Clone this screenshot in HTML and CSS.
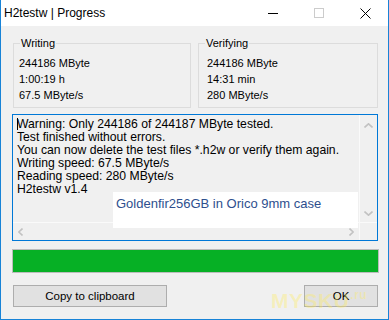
FILE: index.html
```html
<!DOCTYPE html>
<html>
<head>
<meta charset="utf-8">
<title>H2testw | Progress</title>
<link rel="stylesheet" href="styles.css">
</head>
<body>
<div class="window">
  <div class="titlebar">
    <span class="title">H2testw | Progress</span>
    <div class="controls">
      <span class="ctl"><svg width="10" height="10" viewBox="0 0 10 10"><line x1="0" y1="5.5" x2="10" y2="5.5" stroke="#000" stroke-width="1"/></svg></span>
      <span class="ctl"><svg width="10" height="10" viewBox="0 0 10 10"><rect x="0.5" y="0.5" width="9" height="9" fill="none" stroke="#cccccc" stroke-width="1"/></svg></span>
      <span class="ctl"><svg width="11" height="11" viewBox="0 0 11 11"><path d="M0.5 0.5 L10.5 10.5 M10.5 0.5 L0.5 10.5" stroke="#000" stroke-width="1" fill="none"/></svg></span>
    </div>
  </div>
  <div class="client">
    <div class="groups">
      <fieldset class="group g-write">
        <legend>Writing</legend>
        <div class="group-body">
          <div>244186 MByte</div>
          <div>1:00:19 h</div>
          <div>67.5 MByte/s</div>
        </div>
      </fieldset>
      <fieldset class="group g-verify">
        <legend>Verifying</legend>
        <div class="group-body">
          <div>244186 MByte</div>
          <div>14:31 min</div>
          <div>280 MByte/s</div>
        </div>
      </fieldset>
    </div>
    <div class="log">
      <div class="log-text">
        <div><span class="caret"></span>Warning: Only 244186 of 244187 MByte tested.</div>
        <div>Test finished without errors.</div>
        <div>You can now delete the test files *.h2w or verify them again.</div>
        <div>Writing speed: 67.5 MByte/s</div>
        <div>Reading speed: 280 MByte/s</div>
        <div>H2testw v1.4</div>
      </div>
      <div class="vscroll">
        <svg width="9" height="5" viewBox="0 0 9 5"><polyline points="0.5,4.5 4.5,0.8 8.5,4.5" fill="none" stroke="#c2c2c2" stroke-width="1.6"/></svg>
        <svg width="9" height="5" viewBox="0 0 9 5"><polyline points="0.5,0.5 4.5,4.2 8.5,0.5" fill="none" stroke="#c2c2c2" stroke-width="1.6"/></svg>
      </div>
      <div class="hscroll">
        <svg width="5" height="8" viewBox="0 0 5 8"><polyline points="4.5,0.5 0.8,4 4.5,7.5" fill="none" stroke="#c2c2c2" stroke-width="1.6"/></svg>
        <svg width="5" height="8" viewBox="0 0 5 8"><polyline points="0.5,0.5 4.2,4 0.5,7.5" fill="none" stroke="#c2c2c2" stroke-width="1.6"/></svg>
      </div>
      <div class="corner"></div>
      <div class="note">Goldenfir256GB in Orico 9mm case</div>
    </div>
    <div class="progress"><div class="fill" style="width:100%"></div></div>
    <div class="buttons">
      <button class="btn btn-copy">Copy to clipboard</button>
      <button class="btn btn-ok">OK</button>
    </div>
  </div>
  <div class="watermark">MYSKU<span class="wm-ru">.ru</span></div>
</div>
</body>
</html>
```

FILE: styles.css
```css
html, body {
  margin: 0;
  padding: 0;
  background: #ffffff;
}

.window {
  position: relative;
  width: 389px;
  height: 320px;
  box-sizing: border-box;
  border-left: 1px solid #1883d7;
  border-right: 1px solid #1883d7;
  border-bottom: 1px solid #1883d7;
  display: flex;
  flex-direction: column;
  overflow: hidden;
}

.titlebar {
  height: 26px;
  flex: none;
  background: #ffffff;
  display: flex;
  align-items: center;
  justify-content: space-between;
  padding-left: 3px;
}

.title {
  font-family: "Liberation Sans", Arial, sans-serif;
  font-size: 12px;
  color: #000;
}

.controls {
  display: flex;
  height: 26px;
}

.ctl {
  width: 46px;
  height: 26px;
  display: flex;
  align-items: center;
  justify-content: center;
}

.ctl svg {
  display: block;
}

.client {
  flex: 1;
  background: #f0f0f0;
  padding: 10px 10px 0 11px;
  font-family: "Liberation Sans", Arial, sans-serif;
  font-size: 11px;
  color: #000;
}

.groups {
  display: flex;
  gap: 7px;
  margin-left: 1px;
}

.group {
  margin: 0;
  padding: 0 0 4px 0;
  border: 1px solid #dcdcdc;
  min-width: 0;
  box-sizing: border-box;
}

.g-write {
  width: 178px;
}

.g-verify {
  width: 180px;
}

.group legend {
  padding: 0 1px;
  margin-left: 6px;
  line-height: 14px;
  font-size: 11px;
}

.group-body {
  padding-top: 5px;
  line-height: 16px;
}

.g-write .group-body {
  padding-left: 5px;
}

.g-verify .group-body {
  padding-left: 8px;
}

.log {
  position: relative;
  margin-top: 6px;
  width: 366px;
  height: 127px;
  box-sizing: border-box;
  border: 1px solid #0078d7;
  background: #f0f0f0;
  display: grid;
  grid-template-columns: 1fr 18px;
  grid-template-rows: 1fr 18px;
}

.log-text {
  padding: 3px 0 0 4px;
  font-size: 12.2px;
  line-height: 13px;
  white-space: nowrap;
  overflow: hidden;
}

.caret {
  display: inline-block;
  width: 1px;
  height: 12px;
  background: #000;
  margin-right: -1px;
  vertical-align: -2px;
}

.vscroll {
  border-left: 1px solid #fafafa;
  display: flex;
  flex-direction: column;
  align-items: center;
  justify-content: space-between;
  padding: 8px 0 6px 0;
}

.vscroll svg, .hscroll svg {
  display: block;
}

.hscroll {
  border-top: 1px solid #fafafa;
  display: flex;
  align-items: center;
  justify-content: space-between;
  padding: 0 5px;
}

.corner {
  border-top: 1px solid #fafafa;
  border-left: 1px solid #fafafa;
}

.note {
  position: absolute;
  left: 100px;
  top: 77px;
  width: 245px;
  height: 36px;
  box-sizing: border-box;
  background: #ffffff;
  padding: 4px 0 0 3px;
  font-family: "Liberation Sans", Arial, sans-serif;
  font-size: 13px;
  line-height: 16px;
  color: #2e4f8e;
  white-space: nowrap;
}

.progress {
  margin-top: 8px;
  margin-right: -1px;
  height: 24px;
  box-sizing: border-box;
  border: 1px solid #bcbcbc;
  background: #e6e6e6;
}

.fill {
  height: 100%;
  background: #06b025;
}

.buttons {
  margin-top: 12px;
  display: flex;
  justify-content: space-between;
}

.btn {
  height: 22px;
  box-sizing: border-box;
  background: #e1e1e1;
  border: 1px solid #adadad;
  border-radius: 0;
  padding: 0;
  font-family: "Liberation Sans", Arial, sans-serif;
  font-size: 11.5px;
  color: #000;
}

.btn-copy {
  width: 154px;
  margin-left: 1px;
}

.btn-ok {
  width: 74px;
}

.watermark {
  position: absolute;
  left: 270px;
  top: 289px;
  font-family: "Liberation Sans", Arial, sans-serif;
  font-weight: bold;
  font-size: 21px;
  letter-spacing: 0.5px;
  color: rgba(255, 236, 90, 0.35);
  pointer-events: none;
}

.wm-ru {
  position: relative;
  top: -9px;
  font-size: 12px;
  margin-left: 1px;
}
```
